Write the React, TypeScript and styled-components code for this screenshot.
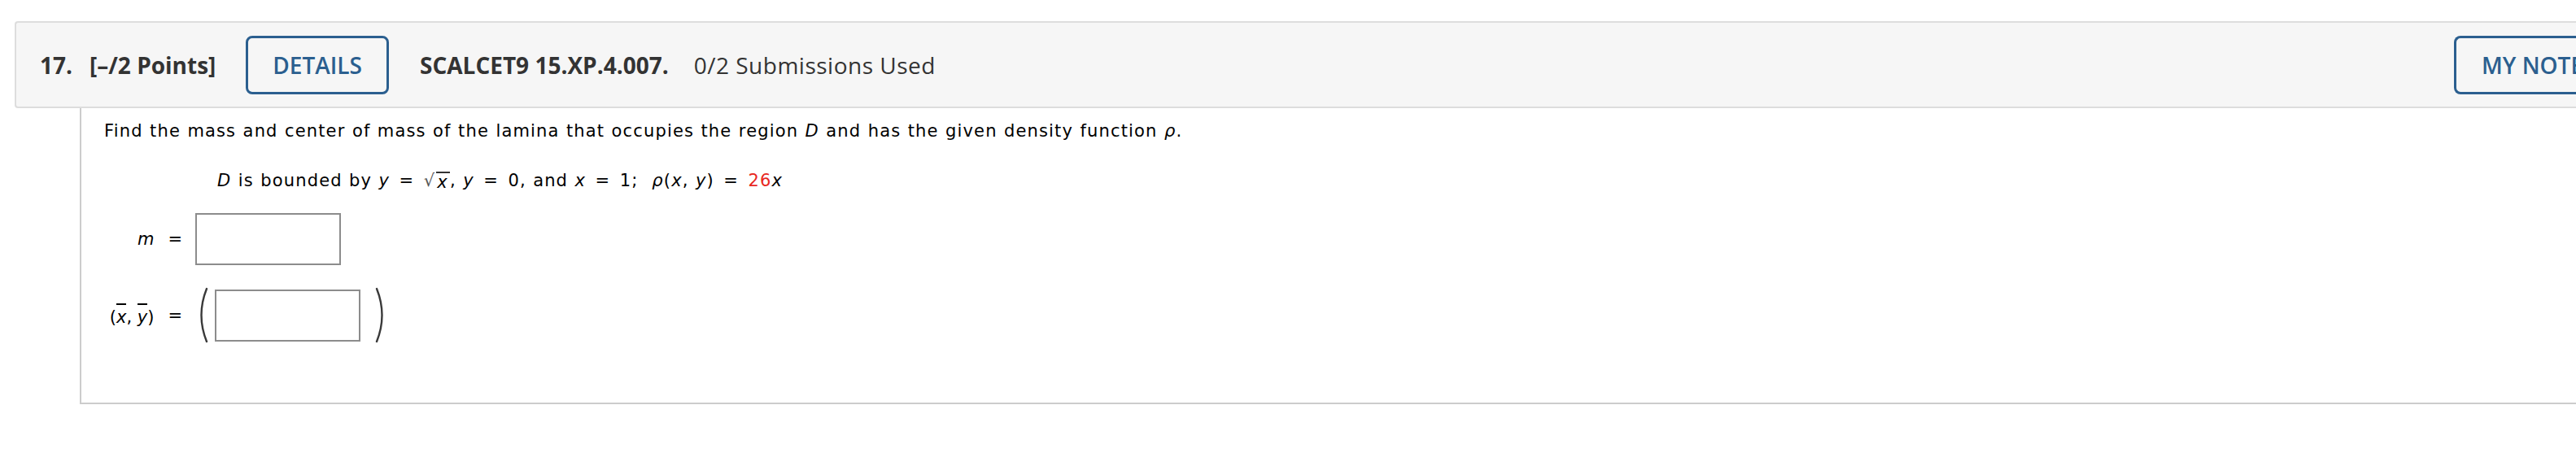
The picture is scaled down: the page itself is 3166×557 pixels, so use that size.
import React, { FC } from 'react';
import styled, { createGlobalStyle } from 'styled-components';

const colors = {
  text: '#333333',
  blue: '#2b5f8f',
  headerBg: '#f6f6f6',
  headerBorder: '#dddddd',
  boxBorder: '#cccccc',
  inputBorder: '#8c8c8c',
  red: '#e8281f',
};

const GlobalStyle = createGlobalStyle`
  html, body {
    margin: 0;
    padding: 0;
    background: #ffffff;
    overflow: hidden;
  }
  body {
    font-family: "Open Sans", "DejaVu Sans", sans-serif;
  }
`;

const Paren: FC<{ side: 'left' | 'right' }> = ({ side }) => (
  <ParenSvg width="16" height="69" viewBox="0 0 16 69">
    <path
      d={side === 'left' ? 'M14 2 Q1 34.5 14 67' : 'M2 2 Q15 34.5 2 67'}
      fill="none"
      stroke="#3a3a3a"
      strokeWidth="2.4"
      strokeLinecap="round"
    />
  </ParenSvg>
);

const App: FC = () => {
  return (
    <Page>
      <GlobalStyle />
      <QuestionHeader>
        <Number>17.</Number>
        <Points>[–/2 Points]</Points>
        <OutlineButton>DETAILS</OutlineButton>
        <Code>SCALCET9 15.XP.4.007.</Code>
        <Submissions>0/2 Submissions Used</Submissions>
        <NotesButton>MY NOTES</NotesButton>
      </QuestionHeader>

      <QuestionBody>
        <Prompt>
          Find the mass and center of mass of the lamina that occupies the region <I>D</I> and
          has the given density function <I>ρ</I>.
        </Prompt>

        <Given>
          <I>D</I> is bounded by <I>y</I> <Op>=</Op> <Sqrt><Radical>√</Radical><Radicand><I>x</I></Radicand></Sqrt>,{' '}
          <I>y</I> <Op>=</Op> 0, and <I>x</I> <Op>=</Op> 1;&nbsp; <I>ρ</I>(<I>x</I>, <I>y</I>) <Op>=</Op>{' '}
          <Red>26</Red><I>x</I>
        </Given>

        <Answers>
          <Label>
            <I>m</I>
            <Eq>=</Eq>
          </Label>
          <AnswerCell>
            <InputBox />
          </AnswerCell>

          <Label>
            <span>
              (<Bar><I>x</I></Bar>, <Bar><I>y</I></Bar>)
            </span>
            <Eq>=</Eq>
          </Label>
          <AnswerCell>
            <Paren side="left" />
            <InputBox $gapRight />
            <Paren side="right" />
          </AnswerCell>
        </Answers>
      </QuestionBody>
    </Page>
  );
};

const Page = styled.div`
    width: 100%;
    height: 557px;
    overflow: hidden;
    box-sizing: border-box;
    padding: 26px 0 0 18px;
  `,
  QuestionHeader = styled.div`
    box-sizing: border-box;
    height: 107px;
    display: flex;
    align-items: center;
    padding-left: 29px;
    background: ${colors.headerBg};
    border: 2px solid ${colors.headerBorder};
    border-right: none;
    border-radius: 4px 0 0 4px;
    color: ${colors.text};
    font-size: 28px;
    overflow: hidden;
  `,
  Number = styled.span`
    font-weight: 700;
    margin-right: 21px;
  `,
  Points = styled.span`
    font-weight: 700;
    margin-right: 37px;
  `,
  OutlineButton = styled.button`
    box-sizing: border-box;
    height: 72px;
    padding: 0 30px;
    margin-right: 38px;
    background: transparent;
    border: 3px solid ${colors.blue};
    border-radius: 8px;
    color: ${colors.blue};
    font-family: "Open Sans", sans-serif;
    font-size: 28px;
    font-weight: 600;
  `,
  NotesButton = styled(OutlineButton)`
    margin: 0 0 0 auto;
    width: 150px;
    flex: none;
    padding: 0 0 0 31px;
    text-align: left;
    white-space: nowrap;
    overflow: hidden;
    border-right: none;
    border-radius: 8px 0 0 8px;
  `,
  Code = styled.span`
    font-weight: 700;
    margin-right: 31px;
  `,
  Submissions = styled.span`
    font-weight: 400;
    letter-spacing: 0.5px;
  `,
  QuestionBody = styled.div`
    margin-left: 80px;
    height: 364px;
    box-sizing: border-box;
    padding: 16px 0 0 28px;
    border-left: 2px solid ${colors.boxBorder};
    border-bottom: 2px solid ${colors.boxBorder};
    font-family: "DejaVu Sans", Verdana, sans-serif;
    font-size: 21px;
    letter-spacing: 1.15px;
    word-spacing: 0.6px;
    line-height: 24px;
    color: #000000;
  `,
  Prompt = styled.div``,
  Given = styled.div`
    margin-top: 37px;
    padding-left: 139px;
  `,
  I = styled.i`
    font-style: italic;
  `,
  Op = styled.span`
    margin: 0 3px;
  `,
  Red = styled.span`
    color: ${colors.red};
  `,
  Sqrt = styled.span`
    display: inline-flex;
    align-items: flex-end;
  `,
  Radical = styled.span`
    color: #555555;
    margin-right: 1px;
  `,
  Radicand = styled.span`
    display: inline-block;
    border-top: 2px solid #333333;
    line-height: 20px;
    padding: 1px 2px 0 1px;
  `,
  Answers = styled.div`
    display: grid;
    grid-template-columns: 96px auto;
    column-gap: 16px;
    row-gap: 27px;
    align-items: center;
    justify-content: start;
    margin-top: 28px;
  `,
  Label = styled.div`
    display: flex;
    justify-content: flex-end;
    align-items: center;
    gap: 17px;
    white-space: nowrap;
    letter-spacing: 0;
    word-spacing: 0;
  `,
  Eq = styled.span``,
  Bar = styled.span`
    display: inline-block;
    border-top: 2px solid #000000;
    line-height: 18px;
    padding-top: 6px;
  `,
  AnswerCell = styled.div`
    display: flex;
    align-items: center;
  `,
  ParenSvg = styled.svg`
    display: block;
  `,
  InputBox = styled.div<{ $gapRight?: boolean }>`
    box-sizing: border-box;
    width: 179px;
    height: 64px;
    border: 2px solid ${colors.inputBorder};
    background: #ffffff;
    margin: ${props => (props.$gapRight ? '0 18px 0 8px' : '0')};
  `;

export default App;
